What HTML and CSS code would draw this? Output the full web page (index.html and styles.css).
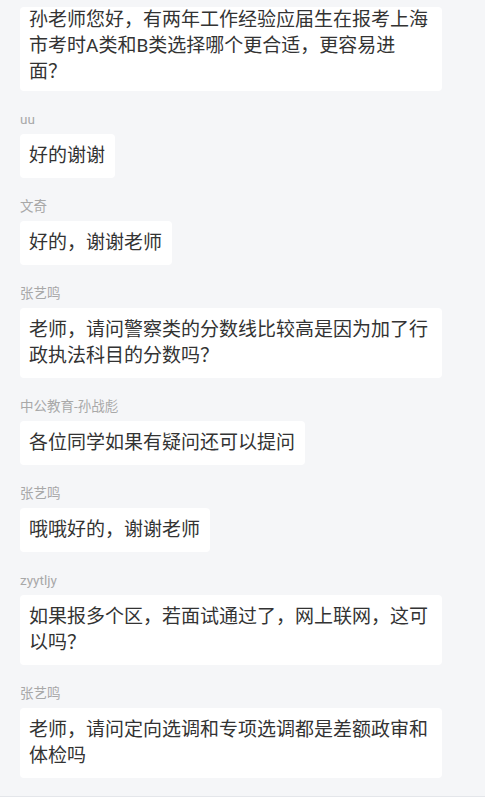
FILE: index.html
```html
<!DOCTYPE html>
<html lang="zh-CN">
<head>
    <meta charset="UTF-8">
    <title>直播互动</title>
    <link rel="stylesheet" href="styles.css">
</head>
<body>
    <div class="chat-window">
        <div class="chat-list">
            <div class="message message-first">
                <div class="bubble">孙老师您好，有两年工作经验应届生在报考上海市考时A类和B类选择哪个更合适，更容易进面？</div>
            </div>
            <div class="message">
                <div class="sender">uu</div>
                <div class="bubble">好的谢谢</div>
            </div>
            <div class="message">
                <div class="sender">文奇</div>
                <div class="bubble">好的，谢谢老师</div>
            </div>
            <div class="message">
                <div class="sender">张艺鸣</div>
                <div class="bubble">老师，请问警察类的分数线比较高是因为加了行政执法科目的分数吗？</div>
            </div>
            <div class="message">
                <div class="sender">中公教育-孙战彪</div>
                <div class="bubble">各位同学如果有疑问还可以提问</div>
            </div>
            <div class="message">
                <div class="sender">张艺鸣</div>
                <div class="bubble">哦哦好的，谢谢老师</div>
            </div>
            <div class="message">
                <div class="sender">zyytljy</div>
                <div class="bubble">如果报多个区，若面试通过了，网上联网，这可以吗？</div>
            </div>
            <div class="message">
                <div class="sender">张艺鸣</div>
                <div class="bubble">老师，请问定向选调和专项选调都是差额政审和体检吗</div>
            </div>
        </div>
    </div>
    <div class="input-bar"></div>
</body>
</html>
```

FILE: styles.css
```css
html, body {
    height: 797px;
    overflow: hidden;
}
body {
    margin: 0;
    background-color: #f5f6f8;
    font-family: Roboto, "Noto Sans CJK SC", sans-serif;
    color: #333;
}
.chat-window {
    margin-top: 7px;
    height: 789px;
    overflow: hidden;
}
.chat-list {
    padding: 0 20px;
}
.message {
    padding-top: 19px;
}
.message-first {
    padding-top: 0;
}
.message-first .bubble {
    padding-top: 0;
    padding-bottom: 6px;
}
.sender {
    font-size: 13.5px;
    line-height: 18px;
    color: #a8a8a8;
    margin-bottom: 6px;
}
.bubble {
    width: fit-content;
    max-width: 422px;
    box-sizing: border-box;
    background-color: #fff;
    border-radius: 4px;
    padding: 9px 10px 9px 9px;
    font-size: 19px;
    line-height: 26px;
}
.input-bar {
    height: 0;
    border-top: 1px solid #e4e6ea;
}
```
